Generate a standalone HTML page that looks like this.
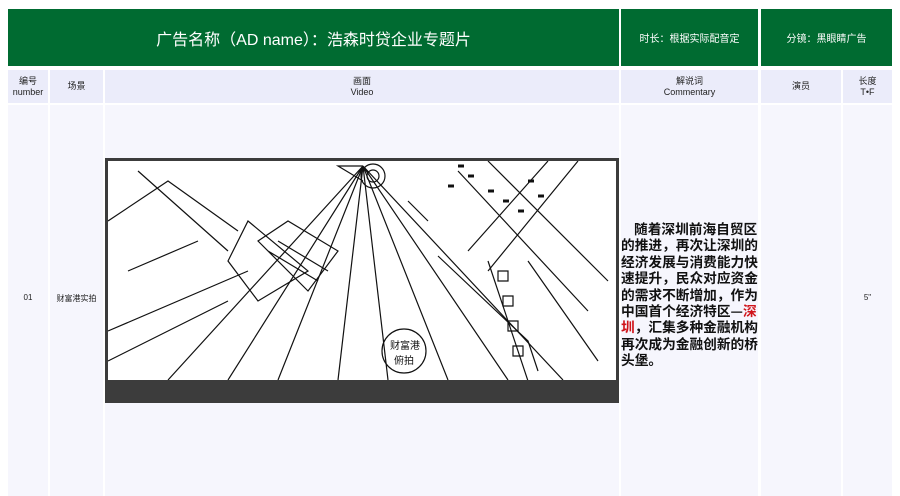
<!DOCTYPE html>
<html><head><meta charset="utf-8"><style>
body{margin:0;width:900px;height:496px;background:#fff;position:relative;overflow:hidden;font-family:"Liberation Sans","Noto Sans CJK SC",sans-serif}
.a{position:absolute;box-sizing:border-box}
.g{background:#006b31;color:#fff;display:flex;align-items:center;justify-content:center;top:9px;height:57px}
.h{background:#ebecfa;top:70px;height:33px;font-size:9px;line-height:11px;color:#222;display:flex;align-items:center;justify-content:center;text-align:center}
.b{background:#f6f6fd;top:105px;height:391px}
</style></head><body>
<div class="a g" style="left:8px;width:611px;font-size:16px">广告名称（AD name）：浩森时贷企业专题片</div>
<div class="a g" style="left:621px;width:137px;font-size:10px">时长：根据实际配音定</div>
<div class="a g" style="left:761px;width:131px;font-size:10px">分镜：黑眼睛广告</div>

<div class="a h" style="left:8px;width:40px">编号<br>number</div>
<div class="a h" style="left:50px;width:53px">场景</div>
<div class="a h" style="left:105px;width:514px">画面<br>Video</div>
<div class="a h" style="left:621px;width:137px">解说词<br>Commentary</div>
<div class="a h" style="left:761px;width:80px">演员</div>
<div class="a h" style="left:843px;width:49px">长度<br>T•F</div>

<div class="a b" style="left:8px;width:40px"></div>
<div class="a b" style="left:50px;width:53px"></div>
<div class="a b" style="left:105px;width:514px"></div>
<div class="a b" style="left:621px;width:137px"></div>
<div class="a b" style="left:761px;width:80px"></div>
<div class="a b" style="left:843px;width:49px"></div>

<div class="a" style="left:8px;top:293px;width:40px;text-align:center;font-size:8px;color:#222">01</div>
<div class="a" style="left:50px;top:293px;width:53px;text-align:center;font-size:8px;color:#222">财富港实拍</div>
<div class="a" style="left:843px;top:293px;width:49px;text-align:center;font-size:8px;color:#222">5"</div>

<div class="a" style="left:105px;top:158px;width:514px;height:245px;background:#3c3c3c;padding:3px 3px 0 3px">
<svg width="508" height="219" viewBox="0 0 508 219" style="background:#fff;display:block" fill="none" stroke="#111" stroke-width="1.2">
<path d="M255 5 L60 219 M255 5 L120 219 M255 5 L230 219 M255 5 L280 219 M255 5 L400 219 M255 5 L455 219 M255 5 L170 219 M255 5 L340 219"/>
<path d="M255 5 L230 5 L255 20 M300 40 L320 60 M330 95 L420 180 L430 210"/>
<path d="M0 170 L140 110 M0 200 L120 140 M20 110 L90 80 M0 60 L60 20 L130 70 M30 10 L120 90 M140 60 L200 110 L150 140 L120 100 Z"/>
<path d="M150 80 L180 60 L230 90 L200 130 Z M160 90 L210 120 M170 80 L220 110"/>
<path d="M380 0 L500 120 M350 10 L480 150 M440 0 L360 90 M470 0 L380 110 M380 100 L420 220 M420 100 L490 200"/>
<circle cx="265" cy="15" r="12"/><circle cx="265" cy="15" r="6"/>
<ellipse cx="296" cy="190" rx="22" ry="22"/>
<text x="282" y="188" font-size="10" fill="#111" stroke="none" font-family="Noto Sans CJK SC">财富港</text>
<text x="286" y="203" font-size="10" fill="#111" stroke="none" font-family="Noto Sans CJK SC">俯拍</text>
<path d="M390 110 h10 v10 h-10z M395 135 h10 v10 h-10z M400 160 h10 v10 h-10z M405 185 h10 v10 h-10z"/>
<path d="M350 5 h6 M360 15 h6 M340 25 h6 M380 30 h6 M395 40 h6 M410 50 h6 M420 20 h6 M430 35 h6" stroke-width="3"/>
</svg></div>

<div class="a" style="left:621px;top:220px;width:139px;font-size:13.7px;line-height:16.4px;font-weight:bold;color:#111;font-family:'Noto Sans CJK SC',sans-serif;text-indent:13px">随着深圳前海自贸区的推进，再次让深圳的经济发展与消费能力快速提升，民众对应资金的需求不断增加，作为中国首个经济特区—<span style="color:#d0141a">深圳</span>，汇集多种金融机构再次成为金融创新的桥头堡。</div>
</body></html>
